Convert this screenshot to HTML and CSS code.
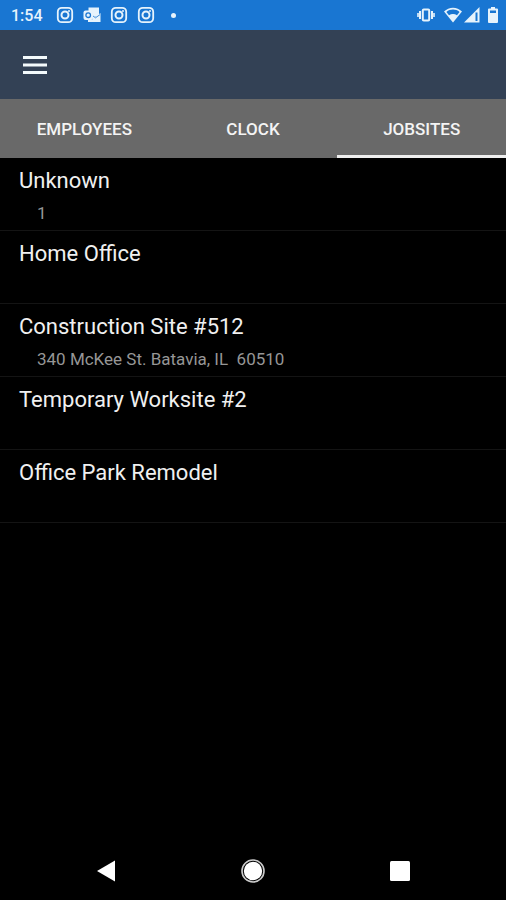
FILE: index.html
```html
<!DOCTYPE html>
<html lang="en">
<head>
<meta charset="utf-8">
<meta name="viewport" content="width=device-width, initial-scale=1">
<title>Jobsites</title>
<link rel="stylesheet" href="styles.css">
</head>
<body>
<svg class="defs" aria-hidden="true">
  <symbol id="camera" viewBox="0 0 18 18">
    <rect x="1.800" y="1.800" width="14.400" height="14.400" rx="4" fill="none" stroke="currentColor" stroke-width="1.800"/>
    <circle cx="9" cy="9" r="3.500" fill="none" stroke="currentColor" stroke-width="2"/>
    <circle cx="13" cy="5" r="1" fill="currentColor"/>
  </symbol>
</svg>
<div class="status">
  <div class="status-left">
    <span class="time">1:54</span>
    <svg class="note" aria-hidden="true"><use href="#camera"/></svg>
    <svg class="note" viewBox="0 0 18 18" aria-hidden="true">
      <path d="M5.500 1.500h10.500v9H5.500z" fill="currentColor"/>
      <path d="M9.500 8.500l3 2.200L17.500 7v9H5v-2.500h4.500z" fill="currentColor"/>
      <path d="M10 10l2.500 1.800L17 8.600" fill="none" stroke="#1976d2" stroke-width=".8"/>
      <rect x=".5" y="4.500" width="9.500" height="9.500" rx="2" fill="currentColor"/>
      <circle cx="5.200" cy="9.200" r="2.300" fill="none" stroke="#1976d2" stroke-width="1.300"/>
    </svg>
    <svg class="note" aria-hidden="true"><use href="#camera"/></svg>
    <svg class="note" aria-hidden="true"><use href="#camera"/></svg>
    <span class="dot"></span>
  </div>
  <div class="status-right">
    <svg class="vibrate" viewBox="0 0 18 16" aria-hidden="true">
      <rect x="5.800" y="2.500" width="6.400" height="11" rx="1" fill="none" stroke="currentColor" stroke-width="2"/>
      <path d="M3 4v8M15 4v8" stroke="currentColor" stroke-width="2"/>
      <path d="M1 6v4M17 6v4" stroke="currentColor" stroke-width="1.600"/>
    </svg>
    <svg class="wifi" viewBox="0 0 18 16" aria-hidden="true">
      <path d="M0 4.500C5-.6 13-.6 18 4.500L9 15.500z" fill="currentColor"/>
      <path d="M2.400 4.900C6.300 1.700 11.700 1.700 15.600 4.900L13 8.200C10.500 6.500 7.500 6.500 5 8.200z" fill="#1976d2"/>
    </svg>
    <svg class="signal" viewBox="0 0 16 16" aria-hidden="true">
      <path d="M0 15.500L15.500 0v15.500z" fill="currentColor"/>
      <path d="M12.500 5.500V14" stroke="#1976d2" stroke-width="2"/>
    </svg>
    <svg class="battery" viewBox="0 0 10 16" aria-hidden="true">
      <path d="M3 0h4v1.500h2a1 1 0 0 1 1 1V15a1 1 0 0 1-1 1H1a1 1 0 0 1-1-1V2.500a1 1 0 0 1 1-1h2z" fill="currentColor"/>
      <path d="M2 3.500h6v2.500H2z" fill="#1976d2"/>
    </svg>
  </div>
</div>
<header class="appbar">
  <button class="menu" type="button" aria-label="Menu">
    <svg viewBox="0 0 24 18" aria-hidden="true"><path d="M0 1.500h24M0 9h24M0 16.500h24" stroke="#f4fafc" stroke-width="3"/></svg>
  </button>
</header>
<nav class="tabs">
  <a href="#employees">EMPLOYEES</a>
  <a href="#clock">CLOCK</a>
  <a href="#jobsites" class="active" aria-current="page">JOBSITES</a>
</nav>
<main>
  <ul class="sites">
    <li><h2>Unknown</h2><p>1</p></li>
    <li><h2>Home Office</h2></li>
    <li><h2>Construction Site #512</h2><p>340 McKee St. Batavia, IL&nbsp; 60510</p></li>
    <li><h2>Temporary Worksite #2</h2></li>
    <li><h2>Office Park Remodel</h2></li>
  </ul>
</main>
<footer class="navbar">
  <button type="button" aria-label="Back">
    <svg viewBox="0 0 24 24" aria-hidden="true"><path d="M3 12L21 1.500v21z" fill="#fff"/></svg>
  </button>
  <button type="button" aria-label="Home">
    <svg viewBox="0 0 24 24" aria-hidden="true"><circle cx="12" cy="12" r="11" fill="none" stroke="#ccc" stroke-width="1.600"/><circle cx="12" cy="12" r="9.200" fill="#fff"/></svg>
  </button>
  <button type="button" aria-label="Recent apps">
    <svg viewBox="0 0 24 24" aria-hidden="true"><rect x="2" y="2" width="20" height="20" rx="1.500" fill="#fff"/></svg>
  </button>
</footer>
</body>
</html>
```

FILE: styles.css
```css
* {
  box-sizing: border-box;
}

body {
  margin: 0;
  min-height: 100vh;
  display: flex;
  flex-direction: column;
  background: #000;
  color: #f0f0f0;
  font-family: Roboto, "Liberation Sans", sans-serif;
}

svg {
  display: block;
}

.defs {
  position: absolute;
  width: 0;
  height: 0;
}

button {
  padding: 0;
  border: 0;
  background: none;
}

.status {
  display: flex;
  justify-content: space-between;
  height: 30px;
  padding: 0 8px 0 11px;
  background: #1976d2;
  color: #e6f3fc;
}

.status-left,
.status-right {
  display: flex;
  align-items: center;
}

.status-left {
  gap: 9px;
}

.time {
  margin-right: 4px;
  padding-top: 2px;
  font-size: 16px;
  font-weight: 500;
  line-height: 20px;
}

.note {
  width: 18px;
  height: 18px;
}

.dot {
  width: 5px;
  height: 5px;
  margin-left: 7px;
  border-radius: 50%;
  background: currentColor;
}

.vibrate {
  width: 18px;
  height: 16px;
  margin-right: 9px;
}

.wifi {
  width: 18px;
  height: 16px;
  margin-right: 2px;
}

.signal {
  width: 16px;
  height: 16px;
  margin-right: 8px;
}

.battery {
  width: 10px;
  height: 16px;
}

.appbar {
  display: flex;
  align-items: center;
  height: 69px;
  padding: 0 23px;
  background: #334155;
}

.menu svg {
  width: 24px;
  height: 18px;
}

.tabs {
  display: grid;
  grid-template-columns: repeat(3, 1fr);
  background: #696969;
}

.tabs a {
  height: 59px;
  padding-top: 3px;
  border-bottom: 3px solid transparent;
  color: #f4f4f4;
  font-size: 17px;
  font-weight: 500;
  line-height: 54px;
  text-align: center;
  text-decoration: none;
}

.tabs .active {
  border-bottom-color: #eee;
}

main {
  flex: 1;
}

.sites {
  margin: 0;
  padding: 0;
  list-style: none;
}

.sites li {
  min-height: 73px;
  padding: 8px 19px 0;
  border-bottom: 1px solid #141414;
}

.sites h2 {
  margin: 0;
  font-size: 22px;
  font-weight: 400;
  line-height: 30px;
}

.sites p {
  margin: 5px 0 0;
  padding-left: 18px;
  color: #969696;
  font-size: 17px;
  line-height: 24px;
}

.navbar {
  display: grid;
  grid-template-columns: repeat(3, 1fr);
  height: 58px;
  padding: 0 33px;
}

.navbar button {
  display: grid;
  place-items: center;
}

.navbar svg {
  width: 24px;
  height: 24px;
}
```
